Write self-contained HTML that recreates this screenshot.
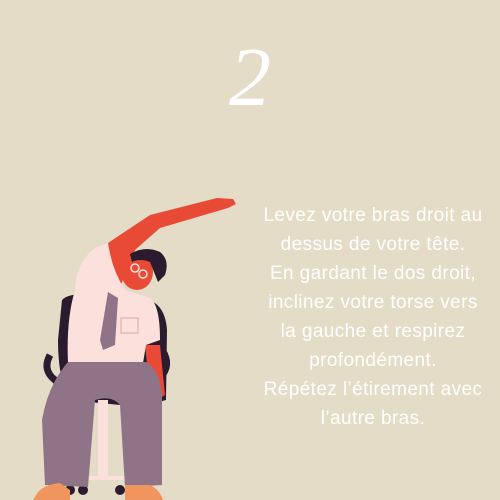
<!DOCTYPE html>
<html><head><style>
html,body{margin:0;padding:0}
body{width:500px;height:500px;background:#e4dcc6;position:relative;overflow:hidden;font-family:"Liberation Sans",sans-serif}
.num{position:absolute;left:0;width:500px;top:30px;text-align:center;color:#fff;font-family:"Liberation Serif",serif;font-style:italic;font-size:84px;line-height:96px}
.txt{position:absolute;left:240px;width:266px;top:201px;text-align:center;color:#fff;font-size:19px;line-height:29px;letter-spacing:0.4px}
svg{position:absolute;left:0;top:0}
</style></head><body>
<div class="num">2</div>
<div class="txt">Levez votre bras droit au<br>dessus de votre tête.<br>En gardant le dos droit,<br>inclinez votre torse vers<br>la gauche et respirez<br>profondément.<br>Répétez l’étirement avec<br>l’autre bras.</div>
<svg width="500" height="500" viewBox="0 0 500 500">
<path d="M62,300 Q70,292 95,295 L140,298 Q165,300 167,330 L166,400 Q150,405 120,405 L70,400 Q58,380 58,340 Z" fill="#2a1c2e"/>
<path d="M50,355 Q42,370 55,380 L62,388" stroke="#2a1c2e" stroke-width="7" fill="none"/>
<path d="M162,350 Q172,365 160,378" stroke="#2a1c2e" stroke-width="7" fill="none"/>
<rect x="98" y="400" width="10" height="80" fill="#fbe0dc"/>
<path d="M78,478 L130,478" stroke="#fbe0dc" stroke-width="4"/>
<circle cx="70" cy="490" r="5" fill="#2a1c2e"/><circle cx="83" cy="490" r="5" fill="#2a1c2e"/>
<circle cx="120" cy="490" r="5" fill="#2a1c2e"/><circle cx="133" cy="490" r="5" fill="#2a1c2e"/>
<path d="M145,345 L160,345 L165,395 L157,400 L150,392 Z" fill="#e84a36"/>
<path d="M108,243 L150,215 L217,198 L233,199 L236,204 L228,208 L160,228 L135,250 L118,292 L100,270 Z" fill="#e84a36"/>
<ellipse cx="137" cy="272" rx="16" ry="18" fill="#e84a36"/>
<path d="M130,254 Q145,245 160,252 Q170,260 165,275 L158,282 L150,262 Q140,258 132,262 Z" fill="#2a1c2e"/>
<circle cx="135" cy="268" r="4" fill="none" stroke="#fbe0dc" stroke-width="1.5"/>
<circle cx="143" cy="274" r="4" fill="none" stroke="#fbe0dc" stroke-width="1.5"/>
<path d="M75,290 Q76,262 95,248 L108,243 Q112,270 125,290 L150,298 Q160,305 160,340 L146,345 L143,363 L68,363 Q66,320 75,290 Z" fill="#fbe0dc"/>
<path d="M108,292 L118,298 L115,345 L103,350 L100,340 Z" fill="#8f7387"/>
<rect x="121" y="318" width="17" height="15" fill="none" stroke="#d9a9a5" stroke-width="1"/>
<path d="M68,362 L146,362 Q160,370 162,395 L162,485 L125,487 L120,405 Q112,395 95,400 L88,487 L45,485 L42,420 Q48,385 68,362 Z" fill="#8f7387"/>
<path d="M35,497 Q40,485 60,483 L70,490 L70,500 L33,500 Z" fill="#f0955e"/>
<path d="M125,485 L150,485 Q160,490 163,500 L125,500 Z" fill="#f0955e"/>
</svg>
</body></html>
